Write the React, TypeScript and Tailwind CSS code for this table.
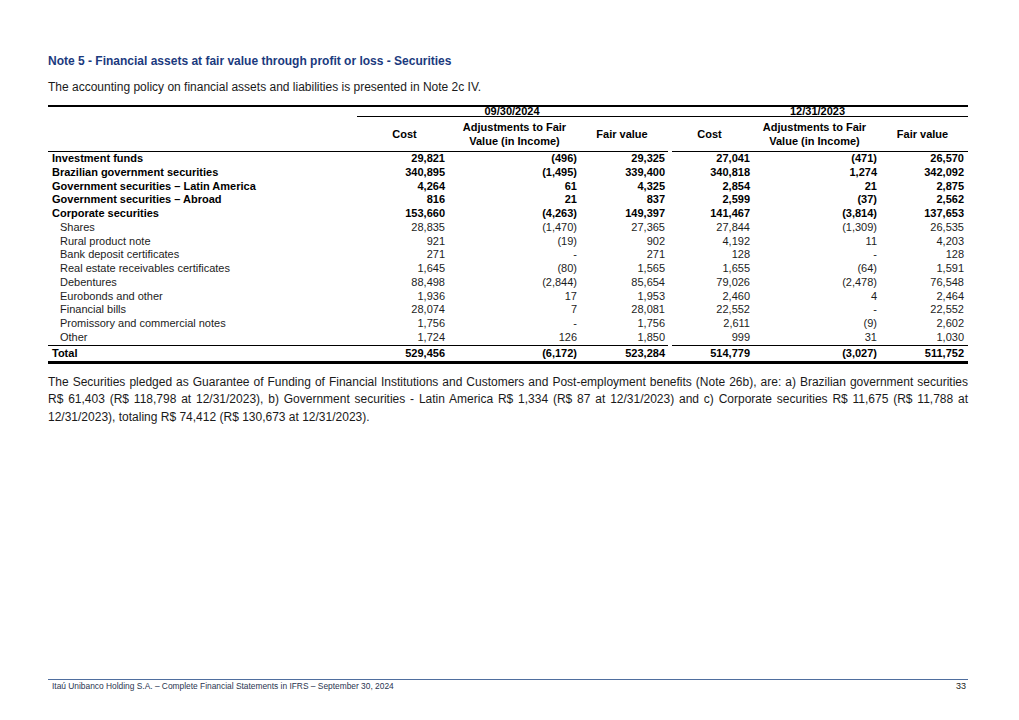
import React from 'react';

type Row = {
    label: string;
    values: string[];
    bold?: boolean;
};

const rows: Row[] = [
    { label: 'Investment funds', values: ['29,821', '(496)', '29,325', '27,041', '(471)', '26,570'], bold: true },
    { label: 'Brazilian government securities', values: ['340,895', '(1,495)', '339,400', '340,818', '1,274', '342,092'], bold: true },
    { label: 'Government securities – Latin America', values: ['4,264', '61', '4,325', '2,854', '21', '2,875'], bold: true },
    { label: 'Government securities – Abroad', values: ['816', '21', '837', '2,599', '(37)', '2,562'], bold: true },
    { label: 'Corporate securities', values: ['153,660', '(4,263)', '149,397', '141,467', '(3,814)', '137,653'], bold: true },
    { label: 'Shares', values: ['28,835', '(1,470)', '27,365', '27,844', '(1,309)', '26,535'] },
    { label: 'Rural product note', values: ['921', '(19)', '902', '4,192', '11', '4,203'] },
    { label: 'Bank deposit certificates', values: ['271', '-', '271', '128', '-', '128'] },
    { label: 'Real estate receivables certificates', values: ['1,645', '(80)', '1,565', '1,655', '(64)', '1,591'] },
    { label: 'Debentures', values: ['88,498', '(2,844)', '85,654', '79,026', '(2,478)', '76,548'] },
    { label: 'Eurobonds and other', values: ['1,936', '17', '1,953', '2,460', '4', '2,464'] },
    { label: 'Financial bills', values: ['28,074', '7', '28,081', '22,552', '-', '22,552'] },
    { label: 'Promissory and commercial notes', values: ['1,756', '-', '1,756', '2,611', '(9)', '2,602'] },
    { label: 'Other', values: ['1,724', '126', '1,850', '999', '31', '1,030'] },
];

const total = ['529,456', '(6,172)', '523,284', '514,779', '(3,027)', '511,752'];

// right padding per value column so the figures line up with the source
const valuePad = ['pr-[7px]', 'pr-0', 'pr-[2px]', 'pr-[2px]', 'pr-0', 'pr-[4px]'];

const gridCols = 'grid grid-cols-[309px_95px_125px_90px_85px_125px_91px]';

const SplitRule: React.FC = () => (
    <div className="flex">
        <div className="w-[620px] border-t border-black" />
        <div className="w-[4px]" />
        <div className="flex-1 border-t border-black" />
    </div>
);

const DataRow: React.FC<{ row: Row }> = ({ row }) => (
    <div className={`${gridCols} h-[13.75px] leading-[13.75px] ${row.bold ? 'font-bold text-black' : 'text-[#1c1c1c]'}`}>
        <div className={row.bold ? 'pl-[4px]' : 'pl-[12px]'}>{row.label}</div>
        {row.values.map((v, i) => (
            <div key={i} className={`text-right ${valuePad[i]}`}>{v}</div>
        ))}
    </div>
);

const App: React.FC = () => {
    return (
        <div className="w-[1019px] h-[720px] bg-white flex flex-col font-['Liberation_Sans',Arial,sans-serif] text-black">
            <div className="pl-[48px] pr-[51px] pt-[54px]">
                <h1 className="text-[12px] leading-[14px] font-bold text-[#1b3a7e]">
                    Note 5 - Financial assets at fair value through profit or loss - Securities
                </h1>
                <p className="mt-[12px] text-[12px] leading-[14px] text-[#1a1a1a]">
                    The accounting policy on financial assets and liabilities is presented in Note 2c IV.
                </p>

                <div className="mt-[11px] text-[11px]">
                    <div className="border-t-2 border-black" />
                    <div className={`${gridCols} h-[9px] leading-[9px] font-bold`}>
                        <div />
                        <div className="col-span-3 text-center">09/30/2024</div>
                        <div className="col-span-3 text-center">12/31/2023</div>
                    </div>
                    <div className="ml-[309px] border-t border-black" />
                    <div className={`${gridCols} h-[34px] font-bold leading-[14px] items-center`}>
                        <div />
                        <div className="text-center">Cost</div>
                        <div className="text-center">Adjustments to Fair<br />Value (in Income)</div>
                        <div className="text-center">Fair value</div>
                        <div className="text-center">Cost</div>
                        <div className="text-center">Adjustments to Fair<br />Value (in Income)</div>
                        <div className="text-center">Fair value</div>
                    </div>
                    <SplitRule />
                    {rows.map(r => (
                        <DataRow key={r.label} row={r} />
                    ))}
                    <SplitRule />
                    <div className={`${gridCols} h-[15px] leading-[15px] font-bold`}>
                        <div className="pl-[4px]">Total</div>
                        {total.map((v, i) => (
                            <div key={i} className={`text-right ${valuePad[i]}`}>{v}</div>
                        ))}
                    </div>
                    <div className="border-t-[3px] border-black" />
                </div>

                <p className="mt-[10px] text-[12px] leading-[17.5px] text-justify text-[#1a1a1a]">
                    The Securities pledged as Guarantee of Funding of Financial Institutions and Customers and Post-employment benefits (Note 26b), are: a) Brazilian government securities R$ 61,403 (R$ 118,798 at 12/31/2023), b) Government securities - Latin America R$ 1,334 (R$ 87 at 12/31/2023) and c) Corporate securities R$ 11,675 (R$ 11,788 at 12/31/2023), totaling R$ 74,412 (R$ 130,673 at 12/31/2023).
                </p>
            </div>

            <footer className="mt-auto mb-[29px] ml-[48px] mr-[51px]">
                <div className="border-t-[1.5px] border-[#4f6e9e]" />
                <div className="flex justify-between items-center pt-[1px] pl-[4px] pr-[2px] text-[8.4px] leading-[10px] text-[#2a3550]">
                    <span>Itaú Unibanco Holding S.A. – Complete Financial Statements in IFRS – September 30, 2024</span>
                    <span className="text-[9px] text-[#1a1a1a]">33</span>
                </div>
            </footer>
        </div>
    );
};

export default App;
